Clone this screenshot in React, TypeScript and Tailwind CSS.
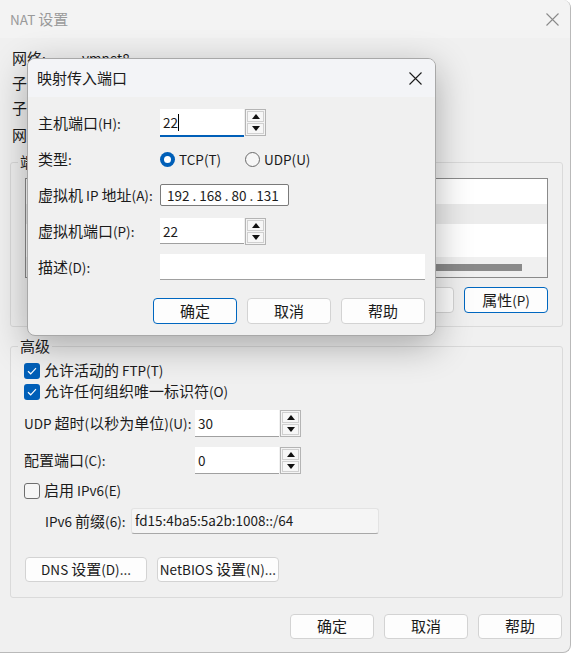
import React from "react";

const CJK = /([\u3000-\u9fff\uff00-\uffef]+)/;

// CJK glyphs at 15px, latin runs a bit smaller like YaHei UI
function T({ s }: { s: string }) {
  return (
    <span>
      {s.split(CJK).map((part, i) =>
        part === "" ? null : CJK.test(part) ? (
          <span key={i}>{part}</span>
        ) : (
          <span key={i} className="whitespace-pre text-[13.5px]">
            {part}
          </span>
        )
      )}
    </span>
  );
}

function CloseIcon({ color }: { color: string }) {
  return (
    <svg width="13" height="13" viewBox="0 0 13 13" fill="none">
      <path d="M0.5 0.5 L12.5 12.5 M12.5 0.5 L0.5 12.5" stroke={color} strokeWidth="1.1" />
    </svg>
  );
}

function Btn({
  label,
  primary = false,
  wide = false,
}: {
  label: string;
  primary?: boolean;
  wide?: boolean;
}) {
  return (
    <button
      type="button"
      className={`flex h-full items-center justify-center rounded-[4px] border bg-[#fdfdfd] text-[15px] text-[#1b1b1b] ${
        wide ? "w-[122px]" : "w-[84px]"
      } ${primary ? "border-[#0067c0]" : "border-[#d3d3d3]"}`}
    >
      <T s={label} />
    </button>
  );
}

function Spin() {
  return (
    <div className="flex h-[27px] w-[21px] flex-col gap-[1px] border border-[#b4b4b4] bg-[#f4f4f4] p-[1px]">
      <div className="flex flex-1 items-center justify-center border border-[#d0d0d0] bg-[#f7f7f7]">
        <svg width="8" height="5" viewBox="0 0 8 5">
          <path d="M0 5 L4 0 L8 5 Z" fill="#111" />
        </svg>
      </div>
      <div className="flex flex-1 items-center justify-center border border-[#d0d0d0] bg-[#f7f7f7]">
        <svg width="8" height="5" viewBox="0 0 8 5">
          <path d="M0 0 L8 0 L4 5 Z" fill="#111" />
        </svg>
      </div>
    </div>
  );
}

function SpinInput({ value, focused = false }: { value: string; focused?: boolean }) {
  return (
    <div className="flex h-full gap-[1px]">
      <div
        className={`flex h-full w-[84px] items-start bg-white pl-[3px] pt-[1px] text-[#1b1b1b] ${
          focused ? "border-b-2 border-[#005fb8]" : "border-b border-[#a0a0a0]"
        }`}
      >
        <span className="text-[13.5px] leading-[24px]">{value}</span>
        {focused ? <span className="mt-[4px] h-[17px] w-[1px] bg-black" /> : null}
      </div>
      <Spin />
    </div>
  );
}

function Check({ checked }: { checked: boolean }) {
  return checked ? (
    <span className="flex h-[16px] w-[16px] shrink-0 items-center justify-center rounded-[3px] bg-[#005fb8]">
      <svg width="10" height="8" viewBox="0 0 10 8" fill="none">
        <path d="M1 4.2 L3.7 6.8 L9 1.2" stroke="white" strokeWidth="1.2" />
      </svg>
    </span>
  ) : (
    <span className="h-[16px] w-[16px] shrink-0 rounded-[3px] border border-[#6e6e6e] bg-[#f6f6f6]" />
  );
}

function Radio({ checked }: { checked: boolean }) {
  return checked ? (
    <span className="flex h-[15px] w-[15px] items-center justify-center rounded-full bg-[#005fb8]">
      <span className="h-[7px] w-[7px] rounded-full bg-white" />
    </span>
  ) : (
    <span className="h-[15px] w-[15px] rounded-full border border-[#6a6a6a] bg-[#f6f6f6]" />
  );
}

function MapPortDialog() {
  return (
    <div className="absolute left-[27px] top-[58px] flex h-[278px] w-[409px] flex-col overflow-hidden rounded-[8px] border border-[#a8a8a8] bg-[#f0f0f0] shadow-[0_10px_36px_rgba(0,0,0,0.3)]">
      <div className="flex h-[38px] shrink-0 items-center justify-between bg-[#f3f4f7] pl-[9px] pr-[13px]">
        <span className="text-[15px] text-[#1b1b1b]">映射传入端口</span>
        <CloseIcon color="#1b1b1b" />
      </div>

      <div className="flex flex-col px-[10px] text-[15px] text-[#1b1b1b]">
        <div className="mt-[12px] flex h-[28px] items-center">
          <span className="w-[122px]">
            <T s="主机端口(H):" />
          </span>
          <SpinInput value="22" focused />
        </div>

        <div className="mt-[11px] flex h-[22px] items-center">
          <span className="w-[122px]">
            <T s="类型:" />
          </span>
          <div className="flex w-[85px] items-center gap-[4px]">
            <Radio checked />
            <T s="TCP(T)" />
          </div>
          <div className="flex items-center gap-[4px]">
            <Radio checked={false} />
            <T s="UDP(U)" />
          </div>
        </div>

        <div className="mt-[14px] flex h-[22px] items-center">
          <span className="w-[122px]">
            <T s="虚拟机 IP 地址(A):" />
          </span>
          <div className="flex h-full w-[129px] items-center rounded-[2px] border border-[#7a7a7a] bg-white pl-[6px]">
            <span className="whitespace-pre text-[13.5px]">192 . 168 . 80 . 131</span>
          </div>
        </div>

        <div className="mt-[12px] flex h-[26px] items-center">
          <span className="w-[122px]">
            <T s="虚拟机端口(P):" />
          </span>
          <SpinInput value="22" />
        </div>

        <div className="mt-[10px] flex h-[26px] items-center">
          <span className="w-[122px]">
            <T s="描述(D):" />
          </span>
          <div className="h-full w-[265px] border-b border-[#a0a0a0] bg-white" />
        </div>

        <div className="mt-[18px] flex h-[26px] justify-end gap-[10px]">
          <Btn label="确定" primary />
          <Btn label="取消" />
          <Btn label="帮助" />
        </div>
      </div>
    </div>
  );
}

export default function App() {
  return (
    <div className="h-[654px] w-[575px] bg-white font-['Noto_Sans_CJK_SC',sans-serif]">
      <div className="relative flex h-[653px] w-[571px] flex-col overflow-hidden rounded-r-[8px] border-b border-r border-[#b9b9b9] bg-[#f0f0f0] text-[#1b1b1b]">
        {/* title bar */}
        <div className="flex h-[38px] shrink-0 items-center justify-between bg-[#f3f3f3] pl-[10px] pr-[11px]">
          <span className="text-[15px] text-[#9a9a9a]">
            <T s="NAT 设置" />
          </span>
          <CloseIcon color="#8a8a8a" />
        </div>

        {/* network info, mostly under the dialog */}
        <div className="flex flex-col pl-[12px] pt-[8px] text-[15px]">
          <div className="flex h-[25px] items-center">
            <span className="w-[70px]">
              <T s="网络:" />
            </span>
            <T s="vmnet8" />
          </div>
          <div className="flex h-[25px] items-center">
            <span className="w-[70px]">
              <T s="子网 IP:" />
            </span>
            <T s="192.168.80.0" />
          </div>
          <div className="flex h-[25px] items-center">
            <span className="w-[70px]">
              <T s="子网掩码:" />
            </span>
            <T s="255.255.255.0" />
          </div>
          <div className="flex h-[28px] items-center">
            <span className="w-[70px]">
              <T s="网关 IP(G):" />
            </span>
            <T s="192.168.80.2" />
          </div>
        </div>

        {/* port forwarding */}
        <fieldset className="ml-[10px] mr-[7px] mt-[4px] rounded-[3px] border border-[#dadada] px-[14px] pb-[13px]">
          <legend className="-ml-[7px] px-[2px] text-[15px] leading-[18px]">
            <T s="端口转发(F)" />
          </legend>
          <div className="mt-[7px] flex h-[100px] flex-col border border-[#8a8a8a] bg-white">
            <div className="h-[25px] shrink-0" />
            <div className="h-[20px] shrink-0 bg-[#ececec]" />
            <div className="flex-1" />
            <div className="flex h-[20px] shrink-0 items-center bg-[#f0f0f0] pl-[4px] pr-[25px]">
              <div className="h-[7px] flex-1 bg-[#8a8a8a]" />
            </div>
          </div>
          <div className="mt-[9px] flex h-[26px] justify-end gap-[10px]">
            <Btn label="添加(A)..." />
            <Btn label="移除(R)" />
            <Btn label="属性(P)" primary />
          </div>
        </fieldset>

        {/* advanced */}
        <fieldset className="ml-[10px] mr-[7px] mt-[10px] rounded-[3px] border border-[#dadada] px-[13px] pb-[15px] text-[15px]">
          <legend className="-ml-[6px] px-[2px] text-[15px] leading-[18px]">高级</legend>
          <div className="mt-[5px] flex h-[21px] items-center gap-[4px]">
            <Check checked />
            <T s="允许活动的 FTP(T)" />
          </div>
          <div className="flex h-[21px] items-center gap-[4px]">
            <Check checked />
            <T s="允许任何组织唯一标识符(O)" />
          </div>

          <div className="mt-[8px] flex h-[27px] items-center">
            <span className="w-[171px]">
              <T s="UDP 超时(以秒为单位)(U):" />
            </span>
            <SpinInput value="30" />
          </div>

          <div className="mt-[10px] flex h-[27px] items-center">
            <span className="w-[171px]">
              <T s="配置端口(C):" />
            </span>
            <SpinInput value="0" />
          </div>

          <div className="mt-[6px] flex h-[21px] items-center gap-[4px]">
            <Check checked={false} />
            <T s="启用 IPv6(E)" />
          </div>

          <div className="mt-[7px] flex h-[26px] items-center pl-[21px]">
            <span className="w-[86px]">
              <T s="IPv6 前缀(6):" />
            </span>
            <div className="flex h-full w-[248px] items-start rounded-[3px] border border-[#e3e3e3] border-b-[#a8a8a8] bg-[#f5f5f5] pl-[3px]">
              <span className="text-[13.5px] leading-[23px]">fd15:4ba5:5a2b:1008::/64</span>
            </div>
          </div>

          <div className="ml-[1px] mt-[23px] flex h-[25px] gap-[10px]">
            <Btn label="DNS 设置(D)..." wide />
            <Btn label="NetBIOS 设置(N)..." wide />
          </div>
        </fieldset>

        {/* dialog buttons */}
        <div className="mt-[16px] flex h-[25px] justify-end gap-[10px] pr-[8px]">
          <Btn label="确定" />
          <Btn label="取消" />
          <Btn label="帮助" />
        </div>

        <MapPortDialog />
      </div>
    </div>
  );
}
